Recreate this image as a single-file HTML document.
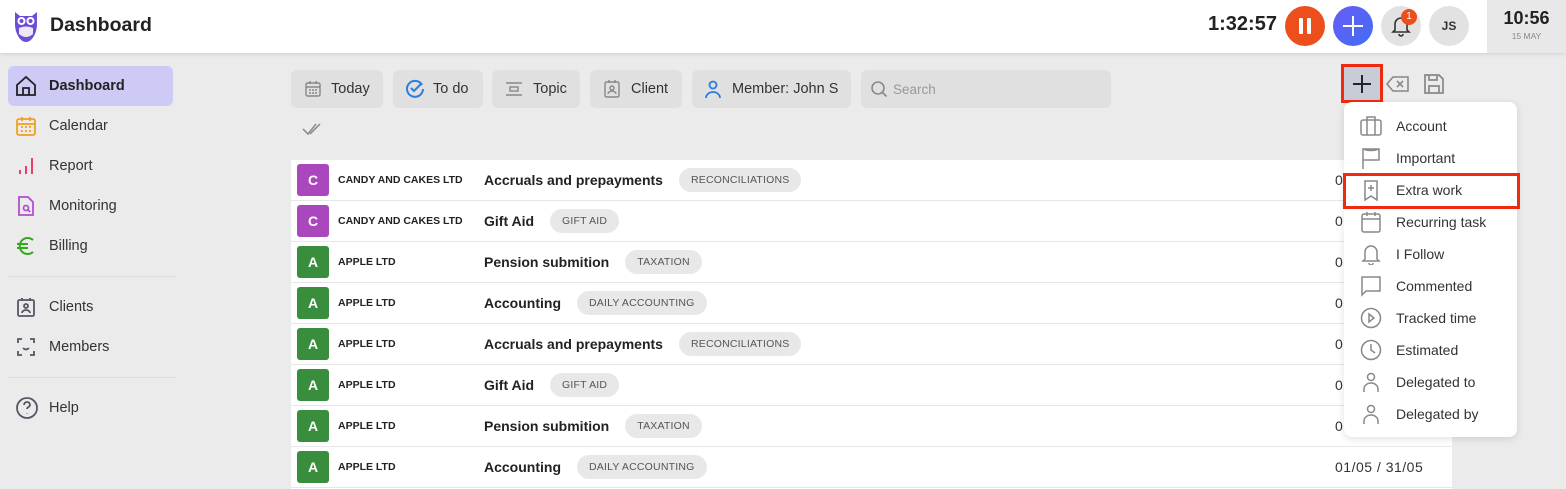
<!DOCTYPE html>
<html><head><meta charset="utf-8"><style>
*{box-sizing:border-box;margin:0;padding:0}
body{width:1566px;height:489px;overflow:hidden;background:#ebebeb;font-family:"Liberation Sans",sans-serif;color:#222;position:relative}
.abs{position:absolute}
.hdr{left:0;top:0;width:1566px;height:53px;background:#fff;box-shadow:0 1px 4px rgba(0,0,0,.12)}
.nav{left:8px;width:165px;height:40px;display:flex;align-items:center;font-size:14.5px;color:#333}
.nav svg{position:absolute;left:7px}
.nav span{position:absolute;left:41px}
.btn{top:70px;height:38px;background:#e0e0e0;border-radius:6px;display:flex;align-items:center;font-size:14.5px;color:#333}
.row{left:291px;width:1161px;height:41px;background:#fff;border-bottom:1px solid #e6e6e6}
.av{position:absolute;left:6px;top:4px;width:32px;height:32px;border-radius:3px;color:#fff;font-weight:bold;font-size:14px;display:flex;align-items:center;justify-content:center}
.co{position:absolute;left:47px;top:14px;font-size:10.5px;font-weight:bold;color:#222}
.tk{position:absolute;left:193px;top:8px;display:flex;align-items:center;white-space:nowrap}
.tk b{font-size:14px;color:#222;font-weight:bold;margin-right:16px}
.tag{background:#e8e8e8;border-radius:12px;font-size:10.5px;color:#555;padding:6px 12px;letter-spacing:.2px}
.dt{position:absolute;left:1044px;top:12px;font-size:14px;color:#333;letter-spacing:.5px}
.menu{left:1344px;top:102px;width:173px;height:335px;background:#fff;border-radius:8px;box-shadow:0 2px 8px rgba(0,0,0,.12)}
.mi{position:absolute;left:0;width:173px;height:32px}
.mi svg{position:absolute;left:16px;top:5px}
.mi span{position:absolute;left:52px;top:8px;font-size:14px;color:#333}
</style></head><body>
<div class="abs hdr"></div>
<svg class="abs" style="left:12px;top:10px" width="28" height="34" viewBox="0 0 28 34"><path d="M3 2l5 4h12l5-4v12c0 9-5 18-11 18S3 23 3 14z" fill="#6b4fd8"/><circle cx="9.5" cy="11" r="4" fill="#fff"/><circle cx="18.5" cy="11" r="4" fill="#fff"/><circle cx="9.5" cy="11" r="2" fill="#6b4fd8"/><circle cx="18.5" cy="11" r="2" fill="#6b4fd8"/><path d="M7 18q7 -3 14 0v6q-7 6 -14 0z" fill="#f1e8f6"/></svg>
<div class="abs" style="left:50px;top:14px;font-size:19.5px;font-weight:bold;color:#222">Dashboard</div>
<div class="abs" style="left:1208px;top:13px;font-size:20px;font-weight:bold;color:#222">1:32:57</div>
<div class="abs" style="left:1285px;top:6px;width:40px;height:40px;border-radius:50%;background:#ed4f1c"></div>
<div class="abs" style="left:1299px;top:18px;width:4px;height:16px;background:#fff;border-radius:1px"></div>
<div class="abs" style="left:1307px;top:18px;width:4px;height:16px;background:#fff;border-radius:1px"></div>
<div class="abs" style="left:1333px;top:6px;width:40px;height:40px;border-radius:50%;background:linear-gradient(135deg,#6a5cf6,#3f6ef5)"></div>
<div class="abs" style="left:1343px;top:24.5px;width:20px;height:2px;background:#fff"></div>
<div class="abs" style="left:1352px;top:15.5px;width:2px;height:20px;background:#fff"></div>
<div class="abs" style="left:1381px;top:6px;width:40px;height:40px;border-radius:50%;background:#e2e2e2"></div>
<svg class="abs" style="left:1391px;top:15px" width="20" height="22" viewBox="0 0 20 22" fill="none" stroke="#333" stroke-width="1.6"><path d="M4 15V9a6 6 0 0112 0v6l2 2H2z"/><path d="M8 19a2 2 0 004 0"/></svg>
<div class="abs" style="left:1401px;top:9px;width:16px;height:16px;border-radius:50%;background:#ed4f1c;color:#fff;font-size:10px;text-align:center;line-height:16px">1</div>
<div class="abs" style="left:1429px;top:6px;width:40px;height:40px;border-radius:50%;background:#e2e2e2;font-size:12px;font-weight:bold;text-align:center;line-height:40px;color:#333">JS</div>
<div class="abs" style="left:1487px;top:0;width:79px;height:53px;background:#e8e8e8"></div>
<div class="abs" style="left:1487px;top:8px;width:79px;text-align:center;font-size:18px;font-weight:bold;color:#222">10:56</div>
<div class="abs" style="left:1487px;top:31px;width:79px;text-align:center;font-size:8.5px;color:#888">15 MAY</div>

<div class="abs nav" style="top:66px;background:#cdcaf5;border-radius:6px;font-weight:bold;color:#222"><svg width="22" height="22" viewBox="0 0 22 22" fill="none" stroke="#222" stroke-width="1.8"><path d="M2 10L11 2l9 8v10H2z"/><path d="M8 20v-7h6v7"/></svg><span>Dashboard</span></div>
<div class="abs nav" style="top:106px"><svg width="22" height="22" viewBox="0 0 22 22" fill="none" stroke="#f0a020" stroke-width="1.8"><rect x="2" y="4" width="18" height="16" rx="2"/><path d="M2 9h18M7 2v4M15 2v4M6 12h2M10 12h2M14 12h2M6 16h2M10 16h2M14 16h2"/></svg><span>Calendar</span></div>
<div class="abs nav" style="top:146px"><svg width="22" height="22" viewBox="0 0 22 22" fill="none" stroke="#ee3c6a" stroke-width="2"><path d="M5 19v-4M11 19v-8M17 19V3"/></svg><span>Report</span></div>
<div class="abs nav" style="top:186px"><svg width="22" height="22" viewBox="0 0 22 22" fill="none" stroke="#b04fd0" stroke-width="1.8"><path d="M4 2h9l5 5v13H4z"/><circle cx="11" cy="13" r="2.5"/><path d="M13 15l2 2"/></svg><span>Monitoring</span></div>
<div class="abs nav" style="top:226px"><svg width="22" height="22" viewBox="0 0 22 22" fill="none" stroke="#2eaa1a" stroke-width="2"><path d="M18 5a8 8 0 100 12M2 9h11M2 13h11"/></svg><span>Billing</span></div>
<div class="abs" style="left:8px;top:276px;width:168px;height:1px;background:#ddd"></div>
<div class="abs nav" style="top:287px"><svg width="22" height="22" viewBox="0 0 22 22" fill="none" stroke="#556" stroke-width="1.8"><rect x="3" y="4" width="16" height="16" rx="1.5"/><circle cx="11" cy="10" r="2"/><path d="M7 17a4 3 0 018 0M7 2v3M15 2v3"/></svg><span>Clients</span></div>
<div class="abs nav" style="top:327px"><svg width="22" height="22" viewBox="0 0 22 22" fill="none" stroke="#556" stroke-width="1.8"><path d="M3 7V3h4M15 3h4v4M19 15v4h-4M7 19H3v-4M8 12q3 3 6 0"/></svg><span>Members</span></div>
<div class="abs" style="left:8px;top:377px;width:168px;height:1px;background:#ddd"></div>
<div class="abs nav" style="top:388px"><svg width="24" height="24" viewBox="0 0 24 24" fill="none" stroke="#556" stroke-width="1.8"><circle cx="12" cy="12" r="10"/><path d="M9 9a3 3 0 116 0c0 2-3 2-3 4M12 17v.5"/></svg><span>Help</span></div>

<div class="abs btn" style="left:291px;width:92px"><svg style="margin-left:13px" width="18" height="18" viewBox="0 0 18 18" fill="none" stroke="#888" stroke-width="1.4"><rect x="2" y="3" width="14" height="13" rx="1.5"/><path d="M2 7h14M6 1v3M12 1v3M5 10h2M8 10h2M11 10h2M5 13h2M8 13h2M11 13h2"/></svg><span style="margin-left:9px">Today</span></div>
<div class="abs btn" style="left:393px;width:90px"><svg style="margin-left:12px" width="20" height="20" viewBox="0 0 20 20" fill="none" stroke="#2a7de1" stroke-width="2"><path d="M17 6A8 8 0 1018 10"/><path d="M6 9l3 3 8-8"/></svg><span style="margin-left:8px">To do</span></div>
<div class="abs btn" style="left:492px;width:88px"><svg style="margin-left:12px" width="20" height="18" viewBox="0 0 20 18" fill="none" stroke="#888" stroke-width="1.4"><path d="M2 3h16M2 15h16"/><rect x="6" y="7" width="8" height="4"/></svg><span style="margin-left:9px">Topic</span></div>
<div class="abs btn" style="left:590px;width:92px"><svg style="margin-left:12px" width="20" height="20" viewBox="0 0 20 20" fill="none" stroke="#888" stroke-width="1.4"><rect x="3" y="3" width="14" height="15" rx="1.5"/><circle cx="10" cy="9" r="2"/><path d="M6 15a4 3 0 018 0M7 1v3M13 1v3"/></svg><span style="margin-left:9px">Client</span></div>
<div class="abs btn" style="left:692px;width:159px"><svg style="margin-left:11px" width="20" height="20" viewBox="0 0 20 20" fill="none" stroke="#2a7de1" stroke-width="1.8"><circle cx="10" cy="6" r="3.5"/><path d="M3 19a7 6 0 0114 0"/></svg><span style="margin-left:9px">Member: John S</span></div>
<div class="abs btn" style="left:861px;width:250px;color:#999;font-size:13.5px"><svg style="margin-left:9px" width="18" height="18" viewBox="0 0 18 18" fill="none" stroke="#888" stroke-width="1.6"><circle cx="8" cy="8" r="6"/><path d="M12.5 12.5l4 4"/></svg><span style="margin-left:5px">Search</span></div>
<svg class="abs" style="left:302px;top:122px" width="22" height="14" viewBox="0 0 22 14" fill="none" stroke="#888" stroke-width="1.5"><path d="M1 7l5 5 8-10M8 12l10-10"/></svg>

<div class="abs" style="left:1341px;top:64px;width:42px;height:39px;border:3px solid #ee2a10;background:#c9ccd6"></div>
<div class="abs" style="left:1353px;top:82.5px;width:18px;height:2px;background:#1e2433"></div>
<div class="abs" style="left:1361px;top:74.5px;width:2px;height:18px;background:#1e2433"></div>
<svg class="abs" style="left:1386px;top:75px" width="24" height="18" viewBox="0 0 24 18" fill="none" stroke="#888" stroke-width="1.6"><path d="M7 2h15v14H7L1 9z"/><path d="M11 6l6 6M17 6l-6 6"/></svg>
<svg class="abs" style="left:1423px;top:73px" width="22" height="22" viewBox="0 0 22 22" fill="none" stroke="#888" stroke-width="1.7"><path d="M2 2h14l4 4v14H2z"/><path d="M6 2v5h8V2M6 20v-7h10v7"/></svg>

<div class="abs" style="left:291px;top:160px;width:1161px;height:329px;background:#fff"></div>
<div class="abs row" style="top:160px"><div class="av" style="background:#ab47bc">C</div><div class="co">CANDY AND CAKES LTD</div><div class="tk"><b>Accruals and prepayments</b><span class="tag">RECONCILIATIONS</span></div><div class="dt">01/05 / 31/05</div></div>
<div class="abs row" style="top:201px"><div class="av" style="background:#ab47bc">C</div><div class="co">CANDY AND CAKES LTD</div><div class="tk"><b>Gift Aid</b><span class="tag">GIFT AID</span></div><div class="dt">01/05 / 31/05</div></div>
<div class="abs row" style="top:242px"><div class="av" style="background:#388e3c">A</div><div class="co">APPLE LTD</div><div class="tk"><b>Pension submition</b><span class="tag">TAXATION</span></div><div class="dt">01/05 / 31/05</div></div>
<div class="abs row" style="top:283px"><div class="av" style="background:#388e3c">A</div><div class="co">APPLE LTD</div><div class="tk"><b>Accounting</b><span class="tag">DAILY ACCOUNTING</span></div><div class="dt">01/05 / 31/05</div></div>
<div class="abs row" style="top:324px"><div class="av" style="background:#388e3c">A</div><div class="co">APPLE LTD</div><div class="tk"><b>Accruals and prepayments</b><span class="tag">RECONCILIATIONS</span></div><div class="dt">01/05 / 31/05</div></div>
<div class="abs row" style="top:365px"><div class="av" style="background:#388e3c">A</div><div class="co">APPLE LTD</div><div class="tk"><b>Gift Aid</b><span class="tag">GIFT AID</span></div><div class="dt">01/05 / 31/05</div></div>
<div class="abs row" style="top:406px"><div class="av" style="background:#388e3c">A</div><div class="co">APPLE LTD</div><div class="tk"><b>Pension submition</b><span class="tag">TAXATION</span></div><div class="dt">01/05 / 31/05</div></div>
<div class="abs row" style="top:447px"><div class="av" style="background:#388e3c">A</div><div class="co">APPLE LTD</div><div class="tk"><b>Accounting</b><span class="tag">DAILY ACCOUNTING</span></div><div class="dt">01/05 / 31/05</div></div>

<div class="abs menu">
<div class="mi" style="top:8px"><svg width="22" height="22" viewBox="0 0 22 22" fill="none" stroke="#888" stroke-width="1.5"><rect x="1" y="5" width="20" height="15" rx="2"/><path d="M7 5V2h8v3M7 5v15M15 5v15"/></svg><span>Account</span></div>
<div class="mi" style="top:40px"><svg width="22" height="22" viewBox="0 0 22 22" fill="none" stroke="#888" stroke-width="1.5"><path d="M3 22V2h16v11H3"/><path d="M3 2q8 3 16 0"/></svg><span>Important</span></div>
<div class="mi" style="top:72px"><svg width="22" height="22" viewBox="0 0 22 22" fill="none" stroke="#888" stroke-width="1.5"><path d="M5 2h12v19l-6-4-6 4z"/><path d="M11 6v6M8 9h6"/></svg><span>Extra work</span></div>
<div class="mi" style="top:104px"><svg width="22" height="22" viewBox="0 0 22 22" fill="none" stroke="#888" stroke-width="1.5"><rect x="2" y="3" width="18" height="18" rx="2"/><path d="M2 8h18M7 1v4M15 1v4"/></svg><span>Recurring task</span></div>
<div class="mi" style="top:136px"><svg width="22" height="22" viewBox="0 0 22 22" fill="none" stroke="#888" stroke-width="1.5"><path d="M5 16V9a6 6 0 0112 0v7l2 2H3z"/><path d="M9 20a2 2 0 004 0"/></svg><span>I Follow</span></div>
<div class="mi" style="top:168px"><svg width="22" height="22" viewBox="0 0 22 22" fill="none" stroke="#888" stroke-width="1.5"><path d="M2 2h18v14H6l-4 4z"/></svg><span>Commented</span></div>
<div class="mi" style="top:200px"><svg width="22" height="22" viewBox="0 0 22 22" fill="none" stroke="#888" stroke-width="1.5"><circle cx="11" cy="11" r="9.5"/><path d="M9 7l5 4-5 4z"/></svg><span>Tracked time</span></div>
<div class="mi" style="top:232px"><svg width="22" height="22" viewBox="0 0 22 22" fill="none" stroke="#888" stroke-width="1.5"><circle cx="11" cy="11" r="9.5"/><path d="M11 5v6l4 3"/></svg><span>Estimated</span></div>
<div class="mi" style="top:264px"><svg width="22" height="22" viewBox="0 0 22 22" fill="none" stroke="#888" stroke-width="1.5"><circle cx="11" cy="6" r="3.5"/><path d="M4 21v-3a7 6 0 0114 0v3"/></svg><span>Delegated to</span></div>
<div class="mi" style="top:296px"><svg width="22" height="22" viewBox="0 0 22 22" fill="none" stroke="#888" stroke-width="1.5"><circle cx="11" cy="6" r="3.5"/><path d="M4 21v-3a7 6 0 0114 0v3"/></svg><span>Delegated by</span></div>
</div>
<div class="abs" style="left:1343px;top:173px;width:177px;height:36px;border:3px solid #ee2a10"></div>
</body></html>
